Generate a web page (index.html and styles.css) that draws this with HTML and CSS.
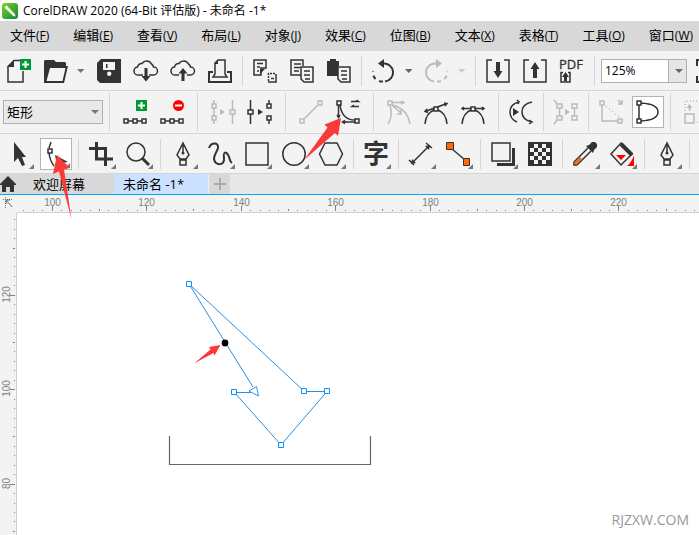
FILE: index.html
```html
<!DOCTYPE html>
<html lang="zh-CN">
<head>
<meta charset="utf-8">
<title>CorelDRAW 2020 (64-Bit 评估版) - 未命名 -1*</title>
<link rel="stylesheet" href="styles.css">
</head>
<body>
<div class="app">
  <header class="titlebar">
    <svg class="logo" viewBox="0 0 16 16" aria-hidden="true">
      <defs><linearGradient id="lg" x1="0" y1="0" x2="1" y2="1"><stop offset="0" stop-color="#7ed321"/><stop offset="1" stop-color="#078a38"/></linearGradient></defs>
      <rect width="16" height="16" rx="3" fill="url(#lg)"/>
      <path d="M3 5L5 3L13 11L13.500 13.500L11 13Z" fill="#f2f6ee"/><path d="M2.500 4.500L4.500 2.500L6 4L4 6Z" fill="#fff"/>
    </svg>
    <h1 class="title">CorelDRAW 2020 (64-Bit 评估版) - 未命名 -1*</h1>
  </header>

  <nav class="menubar" aria-label="菜单">
    <button>文件<span>(<u>F</u>)</span></button>
    <button>编辑<span>(<u>E</u>)</span></button>
    <button>查看<span>(<u>V</u>)</span></button>
    <button>布局<span>(<u>L</u>)</span></button>
    <button>对象<span>(<u>J</u>)</span></button>
    <button>效果<span>(<u>C</u>)</span></button>
    <button>位图<span>(<u>B</u>)</span></button>
    <button>文本<span>(<u>X</u>)</span></button>
    <button>表格<span>(<u>T</u>)</span></button>
    <button>工具<span>(<u>O</u>)</span></button>
    <button>窗口<span>(<u>W</u>)</span></button>
  </nav>

  <div class="bar" role="toolbar" aria-label="标准">
    <button class="tool" aria-label="新建"><svg viewBox="0 0 24 24"><path class="s t" d="M13 1.500H7L1 7.500V23H16V12"/><path class="f" d="M7 1V8H0Z"/><path fill="#093" d="M13 0H24V11H13Z"/><path d="M18.500 2V9M15 5.500H22" stroke="#fff" stroke-width="2"/></svg></button>
    <button class="tool" aria-label="打开"><svg viewBox="0 0 24 24"><path class="f" d="M0 2L1 1H10L12 3H21L22 4V7H24L20 24H0Z"/><path fill="#f3f3f3" d="M6 9H21.500L18.500 22H2.500Z"/></svg></button>
    <button class="drop" aria-label="打开最近"><svg viewBox="0 0 11 24"><path fill="#777" d="M0 10H7.500L3.700 14Z"/></svg></button>
    <button class="tool" aria-label="保存"><svg viewBox="0 0 24 24"><path class="f" d="M4 0H24V24H3L0 21V4Z"/><path fill="#f3f3f3" d="M6 3H18V11H6Z"/><path class="f" d="M9 5H10.500V9H9Z"/><circle cx="12.200" cy="14.700" r="2.200" fill="#f3f3f3"/></svg></button>
    <button class="tool" aria-label="从云下载"><svg viewBox="0 0 24 24"><path class="s t" d="M9 16H4.500A4 4 0 0 1 3.500 8A4 4 0 0 1 8 4.500A5.500 5.500 0 0 1 17.500 5A4.500 4.500 0 0 1 19.500 8A4 4 0 0 1 19.500 16H15"/><path class="s w" d="M12 9V19"/><path class="f" d="M7.500 17H16.500L12 22.500Z"/></svg></button>
    <button class="tool" aria-label="上传到云"><svg viewBox="0 0 24 24"><path class="s t" d="M8 16H4.500A4 4 0 0 1 3.500 8A4 4 0 0 1 8 4.500A5.500 5.500 0 0 1 17.500 5A4.500 4.500 0 0 1 19.500 8A4 4 0 0 1 19.500 16H16"/><path class="s w" d="M12 13V22"/><path class="f" d="M7.500 14.500H16.500L12 9Z"/></svg></button>
    <button class="tool" aria-label="打印"><svg viewBox="0 0 24 24"><path class="s" d="M5 13H1V23H23V13H19"/><path class="s t" d="M5 18H19L17 15V1H10L7 4V15Z"/><path class="f" d="M10 1V5H6Z"/></svg></button>
    <span class="sep"></span>
    <button class="tool" aria-label="剪切"><svg viewBox="0 0 24 24"><path class="s t" d="M1 1H13V9H8V16H1Z"/><path class="s t" d="M4 4.500H10M4 8H7M4 12H6"/><path class="f" d="M7 15L12 10H7Z"/><path class="s t" d="M23 15V23H15"/><path class="s t" stroke-dasharray="2 1" d="M15.500 22V14.500H23"/><path class="s t" d="M18 19.500H21"/></svg></button>
    <button class="tool" aria-label="复制"><svg viewBox="0 0 24 24"><path class="s t" d="M13 7V1H1V16H11"/><path class="s t" d="M4 5H11M4 8.500H10M4 12H9"/><path class="s t p" d="M11 8H23V23H14L11 20Z"/><path class="s t" d="M14 12H20M14 16H20M15 20H20"/></svg></button>
    <button class="tool" aria-label="粘贴"><svg viewBox="0 0 24 24"><path class="f" d="M0 2H3V0H9V2H12V7H11V17H0Z"/><path class="s t p" d="M11 8H23V23H14L11 20Z"/><path class="s t" d="M14 12H20M14 16H20M15 20H20"/></svg></button>
    <span class="sep"></span>
    <button class="tool" aria-label="撤消"><svg viewBox="0 0 24 24"><path class="s" d="M11 4.500A9 9 0 0 1 13 22.500"/><path class="s" stroke-dasharray="4 4" d="M11 22.500A9 9 0 0 1 1 12"/><path class="f" d="M6 4.500L12 0V9Z"/></svg></button>
    <button class="drop" aria-label="撤消列表"><svg viewBox="0 0 11 24"><path fill="#666" d="M0 10H7.500L3.700 14Z"/></svg></button>
    <button class="tool off" aria-label="重做" disabled><svg viewBox="0 0 24 24"><path class="s" d="M11 4.500A9 9 0 0 0 9 22.500"/><path class="s" stroke-dasharray="4 4" d="M12 22.500A9 9 0 0 0 22 12"/><path class="f" d="M17 4.500L11 0V9Z"/></svg></button>
    <button class="drop" aria-label="重做列表" disabled><svg viewBox="0 0 11 24"><path fill="#ccc" d="M0 10H7.500L3.700 14Z"/></svg></button>
    <span class="sep"></span>
    <button class="tool" aria-label="导入"><svg viewBox="0 0 24 24"><path class="s t" d="M6 1H1V23H23V1H18"/><path class="s wide" d="M12 3V13"/><path class="f" d="M7.500 12H16.500L12 19Z"/></svg></button>
    <button class="tool" aria-label="导出"><svg viewBox="0 0 24 24"><path class="s t" d="M6 1H1V23H23V1H18"/><path class="s wide" d="M12 9V19"/><path class="f" d="M7.500 10H16.500L12 3Z"/></svg></button>
    <button class="tool" aria-label="发布为 PDF"><svg viewBox="0 0 24 24"><text class="pdf" x="-1" y="10">PDF</text><path class="s t" d="M3 13.500H1V23H10V13.500H8"/><path class="f" d="M2 18L5.500 13L9 18H7V22H4V18Z"/></svg></button>
    <span class="sep"></span>
    <label class="combo zoom"><select aria-label="缩放级别"><option>125%</option></select><svg viewBox="0 0 8 4"><path fill="#666" d="M0 0H8L4 4Z"/></svg></label>
    <button class="tool" aria-label="全屏预览"><svg viewBox="0 0 24 24"><path class="s" d="M7 1H1V7M1 17V23H7"/></svg></button>
  </div>

  <div class="bar prop" role="toolbar" aria-label="属性">
    <label class="combo shape"><select aria-label="选取模式"><option>矩形</option></select><svg viewBox="0 0 8 4"><path fill="#777" d="M0 0H8L4 4Z"/></svg></label>
    <span class="sep after"></span>
    <button class="tool" aria-label="添加节点"><svg viewBox="0 0 24 24"><path fill="#093" d="M13 0H24V11H13Z"/><path d="M18.500 2V9M15 5.500H22" stroke="#fff" stroke-width="2"/><path class="s t" d="M1 19H5V23H1ZM10 19H14V23H10ZM19 19H23V23H19ZM5 21H10M14 21H19"/></svg></button>
    <button class="tool" aria-label="删除节点"><svg viewBox="0 0 24 24"><circle cx="18.500" cy="5.500" r="5.500" fill="red"/><path d="M15 5.500H22" stroke="#fff" stroke-width="2"/><path class="s t" d="M1 19H5V23H1ZM10 19H14V23H10ZM19 19H23V23H19ZM5 21H10M14 21H19"/></svg></button>
    <span class="sep both"></span>
    <button class="tool off" aria-label="连接两个节点" disabled><svg viewBox="0 0 24 24"><path class="s t" d="M3 0V4M3 8V16M3 20V24M1 4H5V8H1ZM1 16H5V20H1ZM21.500 0V10M21.500 14V24M19 10H24V14H19Z"/><path class="f" d="M9 9L14 12L9 15Z"/></svg></button>
    <button class="tool" aria-label="断开曲线"><svg viewBox="0 0 24 24"><path class="s t" d="M2.500 0V10M2.500 14V24M0 10H5V14H0ZM21 0V4M21 20V24M19 4H23V8H19ZM19 16H23V20H19Z"/><path class="f" d="M10 9L15 12L10 15Z"/></svg></button>
    <span class="sep both"></span>
    <button class="tool off" aria-label="转换为线条" disabled><svg viewBox="0 0 24 24"><path class="s t" d="M5 19L19 5M1 19H5V23H1ZM19 1H23V5H19Z"/></svg></button>
    <button class="tool" aria-label="转换为曲线"><svg viewBox="0 0 24 24"><path class="s t" d="M4 5Q6 20 19 20M2.500 5V17M1 15L2.500 17.500L4 15M19 22H6M9 20.500L6.500 22L9 23.500"/><path class="s t p" d="M1 1H5V5H1ZM19 19H23V23H19Z"/><path class="s t" d="M15 1.500H22.500L20.500 0M23 6.500H16L18 5"/></svg></button>
    <span class="sep both"></span>
    <button class="tool off" aria-label="尖突节点" disabled><svg viewBox="0 0 24 24"><path class="s t" d="M5 2.500H16M14 1L17 2.500L14 4M3 5Q6 17 1 24M5 5Q20 8 23 24M5 5L14 13M14 10V14H10"/><path class="s t p" d="M1 1H5V5H1Z"/></svg></button>
    <button class="tool" aria-label="平滑节点"><svg viewBox="0 0 24 24"><path class="s t" d="M10 10Q2 13 1 24M14 10Q22 13 23 24M1 11.500L23 3.500M3 9L1 11.500L4 12.500M20 3L23 3.500L21 6"/><path class="s t p" d="M10 7H14V11H10Z"/></svg></button>
    <button class="tool" aria-label="对称节点"><svg viewBox="0 0 24 24"><path class="s t" d="M10 10Q2 13 1 24M14 10Q22 13 23 24M1 8.500H23M3 7L1 8.500L3 10M21 7L23 8.500L21 10"/><path class="s t p" d="M10 7H14V11H10Z"/></svg></button>
    <span class="sep before"></span>
    <button class="tool" aria-label="反转方向"><svg viewBox="0 0 24 24"><path class="s t" d="M10 2Q1 4 1 12Q1 19 8 22M8 0L10 2L9 4M23 2Q13 4 13 12Q13 20 23 22M20 20L23 22L20 24"/><path class="f" d="M4 8L10 12L4 16Z"/></svg></button>
    <span class="sep"></span>
    <button class="tool off" aria-label="提取子路径" disabled><svg viewBox="0 0 24 24"><path class="s t" d="M0 0L3 4M3 4H8V8H3ZM3 16H8V20H3ZM3 20L0 24M5.500 8V16M18 4H23V8H18ZM18 16H23V20H18ZM20.500 8V16"/><path class="f" d="M11 9L16 12L11 15Z"/></svg></button>
    <span class="sep"></span>
    <button class="tool off" aria-label="延长曲线使之闭合" disabled><svg viewBox="0 0 24 24"><path class="s t" d="M1 1H5V5H1ZM3 5V21H19M19 19H23V23H19ZM19 0L23 4M23 0V4H19"/><path class="s t" stroke-dasharray="1 3" d="M7 6L20 17"/></svg></button>
    <button class="tool on" aria-label="闭合曲线" aria-pressed="true"><svg viewBox="0 0 24 24"><path class="s t" d="M1 1H5V5H1ZM1 19H5V23H1ZM3 5V19M5 3Q22 4 22 12Q22 20 5 21"/></svg></button>
    <span class="sep after"></span>
    <button class="tool off" aria-label="延展与缩放节点" disabled><svg viewBox="0 0 24 24"><path class="s t" stroke-dasharray="1 2" d="M1 11V1H24M13 22H24"/><path class="s t" d="M1 14H10V23H1ZM5.500 11V6M3.500 8L5.500 5L7.500 8"/></svg></button>
  </div>

  <div class="bar" role="toolbar" aria-label="工具箱">
    <button class="tool fly" aria-label="选择"><svg viewBox="0 0 24 24"><path class="f" d="M7 0V20L11 16L15 24L18 23L15 15H19Z"/></svg></button>
    <button class="tool fly on" aria-label="形状" aria-pressed="true"><svg viewBox="0 0 24 24"><path class="s t" d="M7 0L5 6M4 7H8V11H4ZM5 11Q6 19 10 24"/><path class="f" d="M11 13L24 20L17 21L13 23Z"/></svg></button>
    <span class="sep"></span>
    <button class="tool fly" aria-label="裁剪"><svg viewBox="0 0 24 24"><path class="s w" d="M7.500 0V17H24M0 6.500H16.500V24"/></svg></button>
    <button class="tool fly" aria-label="缩放"><svg viewBox="0 0 24 24"><circle class="s t" cx="10" cy="10" r="9"/><path class="s w" d="M16 16L23 23"/></svg></button>
    <span class="sep"></span>
    <button class="tool fly" aria-label="手绘"><svg viewBox="0 0 24 24"><path class="s t" d="M12 1L6 13L9 17H15L18 13ZM12 2V11M9 18H15V23H9Z"/><circle class="f" cx="12" cy="11" r="1.500"/></svg></button>
    <button class="tool fly" aria-label="艺术笔"><svg viewBox="0 0 24 24"><path class="s" d="M1 6C3 0 11 0 10 6C9 10 6 12 6 17C7 24 17 24 16 16C15 10 18 9 20 13C22 15 21 19 24 21"/></svg></button>
    <button class="tool fly" aria-label="矩形"><svg viewBox="0 0 24 24"><path class="s t" d="M1 1H23V23H1Z"/></svg></button>
    <button class="tool fly" aria-label="椭圆形"><svg viewBox="0 0 24 24"><circle class="s t" cx="12" cy="12" r="11.200"/></svg></button>
    <button class="tool fly" aria-label="多边形"><svg viewBox="0 0 24 24"><path class="s t" d="M6 1H18L23.500 12L18 23H6L.500 12Z"/></svg></button>
    <span class="sep"></span>
    <button class="tool fly" aria-label="文本"><svg viewBox="0 0 24 24"><text class="glyph" x="-1" y="21">字</text></svg></button>
    <span class="sep"></span>
    <button class="tool fly" aria-label="平行度量"><svg viewBox="0 0 24 24"><path class="s t" d="M3 21L20 4M0 18L5 23M17 1L23 6"/><path class="f" d="M2 22L3 17L7 21ZM21 3L16 4L20 8Z"/></svg></button>
    <button class="tool fly" aria-label="连接器"><svg viewBox="0 0 24 24"><path class="s t" d="M6 7L18 17"/><path fill="#ff6a00" stroke="#333" d="M.500 .500H7.500V7.500H.500ZM17.500 16.500H23.500V23.500H17.500Z"/></svg></button>
    <span class="sep"></span>
    <button class="tool fly" aria-label="阴影"><svg viewBox="0 0 24 24"><path class="f" d="M6 6H24V24H6Z"/><path fill="#f3f3f3" d="M0 0H21V21H0Z"/><path class="s t" d="M1 1H19V19H1Z"/></svg></button>
    <button class="tool" aria-label="透明度"><svg viewBox="0 0 24 24"><path class="f" d="M0 0H24V24H0Z"/><path fill="#f3f3f3" d="M6 2H10V6H6ZM14 2H18V6H14ZM2 6H6V10H2ZM10 6H14V10H10ZM18 6H22V10H18ZM6 10H10V14H6ZM14 10H18V14H14ZM2 14H6V18H2ZM10 14H14V18H10ZM18 14H22V18H18ZM6 18H10V22H6ZM14 18H18V22H14Z"/></svg></button>
    <span class="sep"></span>
    <button class="tool fly" aria-label="颜色滴管"><svg viewBox="0 0 24 24"><path class="s t p" d="M15 6L1 20V23H4L18 9"/><path d="M2 22L8 16" stroke="#ff6a00" stroke-width="2.500"/><path class="f" d="M13 4L16 3L19 0H22L24 2V5L21 8L20 11Z"/></svg></button>
    <button class="tool fly" aria-label="交互式填充"><svg viewBox="0 0 24 24"><path class="s t" d="M11 1L22 12L11 23L1 12Z"/><path class="s wide" d="M11 2L22 13"/><path fill="red" d="M6 13H16L11 18ZM24 13V24H17Q22 20 24 13Z"/></svg></button>
    <span class="sep"></span>
    <button class="tool fly" aria-label="轮廓笔"><svg viewBox="0 0 24 24"><path class="s t" d="M12 1L6 13L9 17H15L18 13ZM12 2V11M9 18H15V23H9Z"/><circle class="f" cx="12" cy="11" r="1.500"/></svg></button>
    <span class="sep"></span>
  </div>

  <div class="tabs">
    <button class="home" aria-label="主页"><svg viewBox="0 0 16 16"><path class="f" d="M8 0L16 8V9H14V16H10V11H6V16H2V9H0V8Z"/></svg></button>
    <button class="tab">欢迎屏幕</button>
    <button class="tab active">未命名 -1*</button>
    <button class="add" aria-label="新建文档"><svg viewBox="0 0 12 12"><path d="M6 0V12M0 6H12" stroke="#aaa" stroke-width="2"/></svg></button>
  </div>

  <main class="work">
    <div class="origin"><svg viewBox="0 0 16 17" aria-hidden="true"><path fill="none" stroke="#777" stroke-dasharray="1 1" d="M3 4.500H12M5.500 2V13"/><path fill="none" stroke="#666" d="M6 5L12 12M6 9V5H10"/></svg></div>
    <svg class="ruler across" id="across" aria-hidden="true"></svg>
    <svg class="ruler down" id="down" aria-hidden="true"></svg>
    <div class="canvas">
      <svg class="drawing" viewBox="17 213 400 300" role="img" aria-label="箭头图形">
        <path fill="none" stroke="#666" stroke-width="1.200" d="M169.500 436V464.500H370.500V436"/>
        <path fill="none" stroke="#2a8fe6" d="M253 387L189 284L304.500 391.500H327L281 445L234.500 392.500H251"/>
        <path fill="#fff" stroke="#2a9af5" d="M249 391L256.500 386.500L258.500 396Z"/>
        <g fill="#fff" stroke="#0a90ff"><path d="M186.500 281.500H191.500V286.500H186.500ZM301.500 388.500H306.500V393.500H301.500ZM324.500 388.500H329.500V393.500H324.500ZM278.500 442.500H283.500V447.500H278.500ZM231.500 389.500H236.500V394.500H231.500Z"/></g>
        <circle cx="225" cy="343" r="3.400"/>
        <path fill="#f93a37" d="M220.500 345L209 347L210.500 349.500L194 363.500L213.500 353L214.500 355.500Z"/>
      </svg>
      <p class="mark">RJZXW.COM</p>
    </div>
  </main>

  <svg class="pointers" aria-hidden="true">
    <path fill="#f93a37" d="M57 155L70 168L64 169.500L71.500 219.500L59 171.500L53 174Z"/>
    <path fill="#f93a37" d="M341 118L324.500 124.500L327.500 127.500L304 160L335 133L338 136Z"/>
  </svg>
</div>
<script src="rulers.js"></script>
</body>
</html>
```
FILE: styles.css
```css
* { box-sizing: border-box; }
body {
  margin: 0;
  background: #fff;
  color: #000;
  font: 13px/20px "Open Sans", "Noto Sans CJK SC", sans-serif;
}
button { padding: 0; border: 0; background: none; color: inherit; font: inherit; }
svg { display: block; }
.app { position: relative; display: flex; flex-direction: column; min-height: 100vh; overflow: hidden; }

.titlebar { display: flex; align-items: center; gap: 5px; height: 21px; padding-left: 2px; }
.logo { width: 16px; height: 16px; }
.title { margin: 0; font-size: 12px; font-weight: 400; white-space: nowrap; }

.menubar { display: flex; gap: 24px; height: 30px; padding: 0 10px 2px; overflow: hidden; background: #d8d8d8; }
.menubar button { flex: none; white-space: nowrap; }
.menubar span { font-size: 12px; }

.bar {
  display: flex;
  align-items: center;
  gap: 5px;
  padding: 4px 3px 3px;
  overflow: hidden;
  background: #f3f3f3;
  border-bottom: 1px solid #d5d5d5;
}
.prop { padding: 2px 3px; }
.bar > * { flex: none; }
.tool { position: relative; width: 32px; height: 32px; padding: 4px; }
.tool svg { width: 24px; height: 24px; overflow: visible; }
.drop svg { width: 11px; height: 24px; }
.on { padding: 3px; background: #fff; border: 1px solid #b4b4b4; }
.fly::after {
  content: "";
  position: absolute;
  right: 1px;
  bottom: 1px;
  border-left: 5px solid transparent;
  border-bottom: 5px solid #777;
}
.sep { width: 1px; height: 30px; margin: 0 1px; background: #d5d5d5; }
.prop .sep { height: 38px; }
.both { margin: 0 4px; }
.after { margin-right: 4px; }
.before { margin-left: 4px; }

.s { fill: none; stroke: #333; stroke-width: 2; }
.t { stroke-width: 1.5; }
.w { stroke-width: 3; }
.wide { stroke-width: 4; }
.p { fill: #f3f3f3; }
.f { fill: #333; }
.off .s { stroke: #bbb; }
.off .f { fill: #bbb; }
.pdf { font: 400 13px "Open Sans", sans-serif; fill: #333; stroke: #333; stroke-width: 0.3; }
.glyph { font: 700 26px "Noto Sans CJK SC", sans-serif; fill: #333; }

.combo { position: relative; height: 24px; }
.combo select {
  width: 100%;
  height: 24px;
  padding: 0 3px;
  border: 1px solid #b0b0b0;
  border-radius: 0;
  appearance: none;
  background: #e9e9e9;
  color: #000;
  font: inherit;
}
.combo svg { position: absolute; right: 4px; top: 10px; width: 8px; height: 4px; pointer-events: none; }
.shape { width: 100px; }
.zoom { width: 86px; }
.zoom select { background: linear-gradient(#b0b0b0, #b0b0b0) right 17px top / 1px 100% no-repeat, linear-gradient(#e6e6e6, #e6e6e6) right / 17px 100% no-repeat, #fff; font-size: 12px; }

.tabs { display: flex; height: 21px; background: #e8e8e8; border-bottom: 1px solid #00a8ff; }
.home { width: 24px; background: #d8d8d8; }
.home svg { width: 16px; height: 16px; }
.tab { padding: 0 29px 0 9px; background: #d8d8d8; white-space: nowrap; }
.active { padding: 0 24px 0 9px; background: #cce0ff; }
.add { display: grid; place-items: center; width: 22px; border-left: 1px solid #eee; background: #d8d8d8; }
.add svg { width: 12px; height: 12px; }

.work { flex: 1; display: grid; grid-template: 18px 1fr / 17px 1fr; background: #f3f3f3; }
.origin svg { width: 16px; height: 17px; }
.ruler { width: 100%; height: 100%; overflow: hidden; }
.across { border-bottom: 1px solid #d0d0d0; }
.down { border-right: 1px solid #d0d0d0; }
.ruler text { font: 10px "Liberation Sans", sans-serif; fill: #808080; text-anchor: middle; }
.ruler path { fill: none; stroke: #808080; }
.canvas { position: relative; min-height: 300px; background: #fff; }
.drawing { width: 400px; height: 300px; }
.mark { position: absolute; right: 10px; bottom: 5px; margin: 0; color: #999; font-size: 14px; }
.pointers { position: absolute; top: 0; left: 0; width: 100%; height: 100%; pointer-events: none; }
```
FILE: rulers.js
```js
const NS = 'http://www.w3.org/2000/svg';
const STEP = 9.444; // pixels for two ruler units

// Draws ticks every two units along the visible length, with a label on every tenth tick.
function drawRuler(id, start, first, direction, vertical) {
  const svg = document.getElementById(id);
  const box = svg.getBoundingClientRect();
  const length = vertical ? box.height : box.width;
  let d = '';
  for (let i = -Math.floor(start / STEP); start + i * STEP < length; i++) {
    const pos = Math.floor(start + i * STEP) + 0.5;
    const major = i % 10 === 0;
    const size = major ? 5 : i % 5 === 0 ? 2 : 1;
    const end = vertical ? 15 : 16;
    d += vertical ? `M${end - size} ${pos}H${end}` : `M${pos} ${end - size}V${end}`;
    if (major && pos > 10 && pos < length - 10) {
      const text = document.createElementNS(NS, 'text');
      text.textContent = first + direction * i * 2;
      text.setAttribute('transform', vertical ? `translate(10 ${pos - 1}) rotate(-90)` : `translate(${pos} 11)`);
      svg.append(text);
    }
  }
  const path = document.createElementNS(NS, 'path');
  path.setAttribute('d', d);
  svg.append(path);
}

drawRuler('across', 35.3, 100, 1, false);
drawRuler('down', 82.3, 120, -1, true);
```
